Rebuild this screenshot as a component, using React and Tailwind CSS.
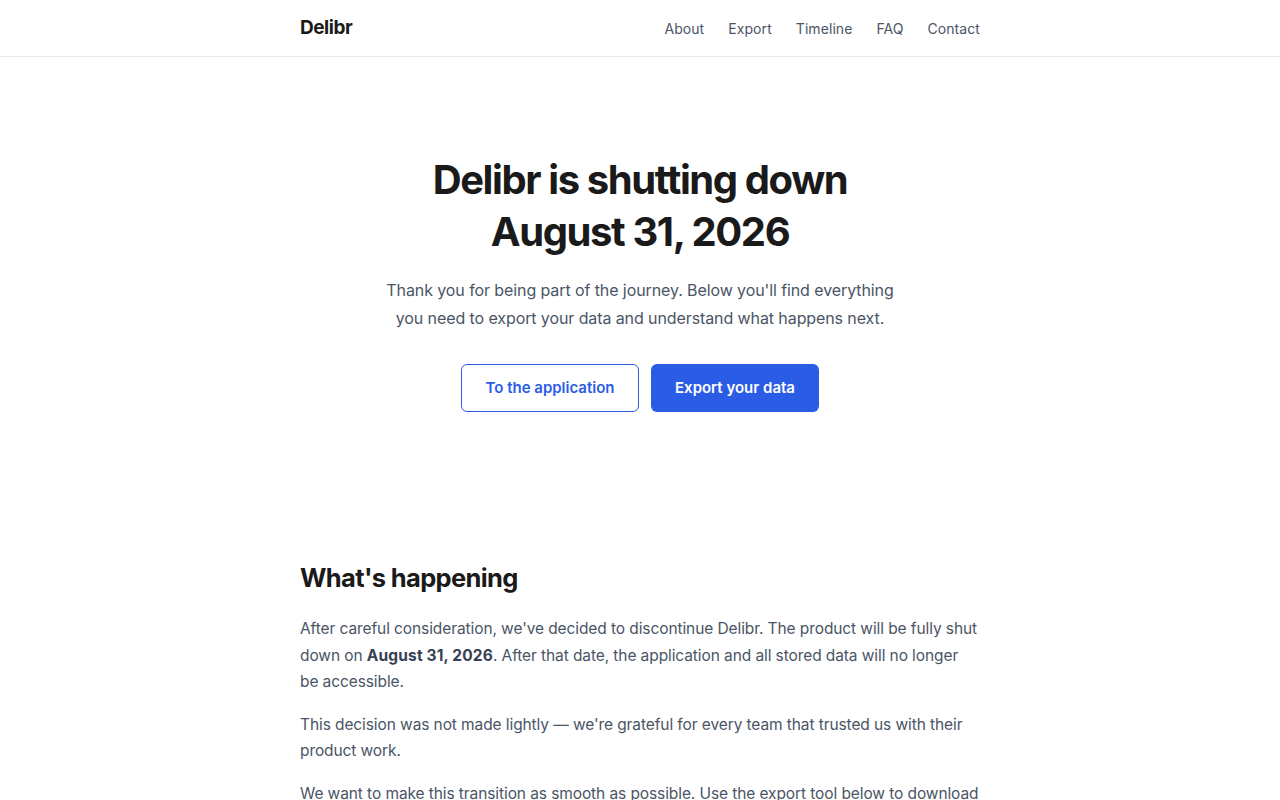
export default function App() {
  const links = ['About', 'Export', 'Timeline', 'FAQ', 'Contact'];

  return (
    <div className="min-h-screen bg-white text-[#1a1a1a]" style={{ fontFamily: 'Inter, "Noto Sans", sans-serif' }}>
      <header className="border-b border-gray-200">
        <div className="mx-auto flex h-14 max-w-[680px] items-center justify-between pt-px">
          <a href="#" className="text-[19px] font-bold tracking-tight text-[#1a1a1a]">Delibr</a>
          <nav className="flex items-center gap-6">
            {links.map((l) => (
              <a key={l} href="#" className="text-[14px] tracking-[0.005em] text-gray-600">{l}</a>
            ))}
          </nav>
        </div>
      </header>

      <main>
        <section className="mx-auto max-w-[680px] pt-[97px] pb-[150px] text-center">
          <h1 className="text-[40px] font-bold leading-[52px] tracking-[-0.035em]">
            Delibr is shutting down
            <br />
            August 31, 2026
          </h1>
          <p className="mx-auto mt-[18px] max-w-[520px] text-[16px] leading-[28px] tracking-[-0.006em] text-gray-600">
            Thank you for being part of the journey. Below you'll find everything you need to export your data and understand what happens next.
          </p>
          <div className="mt-8 flex justify-center gap-3">
            <a href="#" className="flex h-12 w-[178px] items-center justify-center rounded-md border border-[#2b5ce6] text-[15px] font-semibold text-[#2b5ce6]">
              To the application
            </a>
            <a href="#" className="flex h-12 w-[168px] items-center justify-center rounded-md bg-[#2b5ce6] text-[15px] font-semibold text-white">
              Export your data
            </a>
          </div>
        </section>

        <section className="mx-auto max-w-[680px]">
          <h2 className="text-[25.5px] font-bold leading-8 tracking-tight">What's happening</h2>
          <div className="mt-[22px] space-y-4 text-[15.5px] leading-[26.5px] tracking-[-0.006em] text-gray-600">
            <p>
              After careful consideration, we've decided to discontinue Delibr. The product will be fully shut down on <strong className="font-bold tracking-[0.01em] text-gray-700">August 31, 2026</strong>. After that date, the application and all stored data will no longer be accessible.
            </p>
            <p>
              This decision was not made lightly — we're grateful for every team that trusted us with their product work.
            </p>
            <p>
              We want to make this transition as smooth as possible. Use the export tool below to download all your documents, decisions and feedback before the shutdown date.
            </p>
          </div>
        </section>
      </main>
    </div>
  );
}
